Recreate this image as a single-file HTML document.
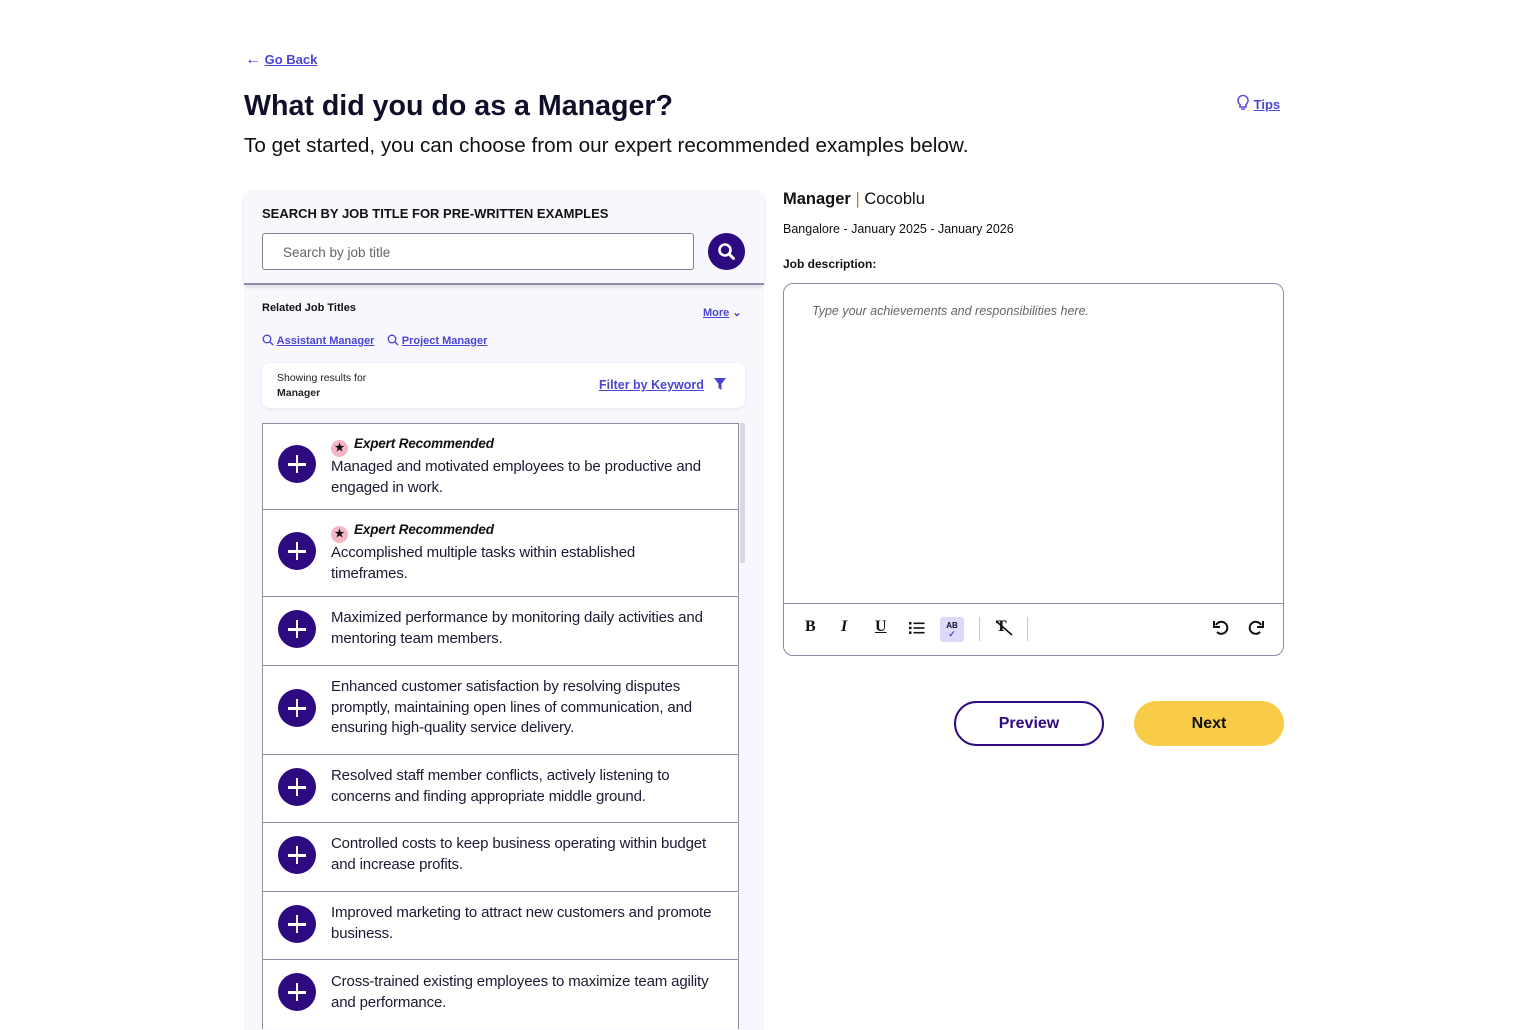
<!DOCTYPE html>
<html><head><meta charset="utf-8"><style>
*{box-sizing:border-box;margin:0;padding:0}
body{width:1540px;height:1024px;overflow:hidden;background:#fff;font-family:"Liberation Sans",sans-serif;color:#0f0f2a;position:relative}
.a{position:absolute}
a,.lnk{color:#4b45d6;text-decoration:underline}
.row{position:absolute;left:262px;width:477px;border-top:1px solid #8a8fa3;background:#fff}
.plus{position:absolute;left:15px;width:38px;height:38px;border-radius:50%;background:#2e0a80}
.plus:before{content:"";position:absolute;left:10px;top:18px;width:18px;height:2.5px;background:#fff}
.plus:after{content:"";position:absolute;left:17.8px;top:10px;width:2.5px;height:18px;background:#fff}
.txt{position:absolute;left:68px;width:392px;font-size:15px;line-height:20.7px;color:#1a1a33;letter-spacing:-0.15px}
.er{font-style:italic;font-weight:bold;font-size:13.5px;color:#111;line-height:18px}
.star{display:inline-block;width:17px;height:17px;border-radius:50%;background:#f6b7c4;vertical-align:-3px;margin-right:6px;text-align:center;font-size:11px;line-height:17px;font-style:normal;color:#111}
.tb{position:absolute;top:618px;font-size:16px;font-weight:bold;color:#111}
</style></head><body>
<div class="a" style="left:245px;top:52px;font-size:13px;font-weight:bold"><span style="color:#4b45d6;font-size:16px;line-height:13px">&#8592;</span>&nbsp;<a style="font-weight:bold">Go Back</a></div>
<div class="a" style="left:244px;top:90px;font-size:28.6px;font-weight:bold;color:#0f0f2a">What did you do as a Manager?</div>
<div class="a" style="left:244px;top:134px;font-size:20.7px;color:#111">To get started, you can choose from our expert recommended examples below.</div>
<div class="a" style="left:1236px;top:94px;font-size:13px;font-weight:bold"><svg width="14" height="18" viewBox="0 0 14 18" style="vertical-align:-3px"><path d="M7 1.5a5 5 0 0 0-3 9v2.5h6v-2.5a5 5 0 0 0-3-9zM5 15h4" fill="none" stroke="#5a4de0" stroke-width="1.6"/></svg>&nbsp;<a>Tips</a></div>

<div class="a" style="left:244px;top:190px;width:520px;height:840px;background:#f7f7fd;border-radius:8px 8px 0 0"></div>
<div class="a" style="left:244px;top:190px;width:520px;height:95px;background:#f7f7fd;border-bottom:2px solid #8a8fa3;box-shadow:0 2px 4px rgba(0,0,0,.12);border-radius:8px 8px 0 0"></div>
<div class="a" style="left:262px;top:206px;font-size:13px;font-weight:bold;color:#111">SEARCH BY JOB TITLE FOR PRE-WRITTEN EXAMPLES</div>
<div class="a" style="left:262px;top:233px;width:432px;height:37px;border:1px solid #7d8090;border-radius:3px;background:#fff;padding:11px 0 0 20px;font-size:13.5px;color:#666"><span>Search by job title</span></div>
<div class="a" style="left:708px;top:233px;width:37px;height:37px;border-radius:50%;background:#2e0a80"><svg width="37" height="37" viewBox="0 0 37 37"><circle cx="17" cy="17" r="5.5" fill="none" stroke="#fff" stroke-width="2.6"/><path d="M21 21l4.5 4.5" stroke="#fff" stroke-width="3" stroke-linecap="round"/></svg></div>
<div class="a" style="left:262px;top:302px;font-size:11px;font-weight:bold;color:#111">Related Job Titles</div>
<div class="a" style="left:703px;top:306px;font-size:11px;font-weight:bold"><a>More</a> <span style="color:#4b45d6">&#8964;</span></div>
<div class="a" style="left:262px;top:334px;font-size:11px;font-weight:bold;color:#4b45d6"><svg width="12" height="12" viewBox="0 0 12 12" style="vertical-align:-2px"><circle cx="5" cy="5" r="3.8" fill="none" stroke="#4b45d6" stroke-width="1.3"/><path d="M8 8l3 3" stroke="#4b45d6" stroke-width="1.3"/></svg> <a>Assistant Manager</a>&nbsp;&nbsp;&nbsp; <svg width="12" height="12" viewBox="0 0 12 12" style="vertical-align:-2px"><circle cx="5" cy="5" r="3.8" fill="none" stroke="#4b45d6" stroke-width="1.3"/><path d="M8 8l3 3" stroke="#4b45d6" stroke-width="1.3"/></svg> <a>Project Manager</a></div>
<div class="a" style="left:262px;top:363px;width:483px;height:45px;background:#fff;border-radius:8px;box-shadow:0 1px 4px rgba(0,0,0,.08)"></div>
<div class="a" style="left:277px;top:371px;font-size:10.5px;color:#222;line-height:15px">Showing results for<br><b>Manager</b></div>
<div class="a" style="left:599px;top:378px;font-size:12.5px;font-weight:bold"><a>Filter by Keyword</a>&nbsp;&nbsp; <svg width="12" height="12" viewBox="0 0 12 12" style="vertical-align:-1px"><path d="M0 0h12L7.5 6v6L4.5 10V6z" fill="#4b45d6"/></svg></div>
<div class="a" style="left:740px;top:423px;width:5px;height:140px;background:#d8d8de;border-radius:2px"></div>

<div class="row" style="top:423px;height:87px;border-left:1px solid #8a8fa3;border-right:1px solid #8a8fa3"><div class="plus" style="top:21px"></div><div class="txt" style="top:10px"><span class="er"><span class="star">&#9733;</span>Expert Recommended</span><br>Managed and motivated employees to be productive and engaged in work.</div></div>
<div class="row" style="top:509px;height:88px;border-left:1px solid #8a8fa3;border-right:1px solid #8a8fa3"><div class="plus" style="top:22px"></div><div class="txt" style="top:10px;width:370px"><span class="er"><span class="star">&#9733;</span>Expert Recommended</span><br>Accomplished multiple tasks within established timeframes.</div></div>
<div class="row" style="top:596px;height:70px;border-left:1px solid #8a8fa3;border-right:1px solid #8a8fa3"><div class="plus" style="top:13px"></div><div class="txt" style="top:11px">Maximized performance by monitoring daily activities and mentoring team members.</div></div>
<div class="row" style="top:665px;height:90px;border-left:1px solid #8a8fa3;border-right:1px solid #8a8fa3"><div class="plus" style="top:23px"></div><div class="txt" style="top:11px">Enhanced customer satisfaction by resolving disputes promptly, maintaining open lines of communication, and ensuring high-quality service delivery.</div></div>
<div class="row" style="top:754px;height:69px;border-left:1px solid #8a8fa3;border-right:1px solid #8a8fa3"><div class="plus" style="top:13px"></div><div class="txt" style="top:11px">Resolved staff member conflicts, actively listening to concerns and finding appropriate middle ground.</div></div>
<div class="row" style="top:822px;height:70px;border-left:1px solid #8a8fa3;border-right:1px solid #8a8fa3"><div class="plus" style="top:13px"></div><div class="txt" style="top:11px">Controlled costs to keep business operating within budget and increase profits.</div></div>
<div class="row" style="top:891px;height:69px;border-left:1px solid #8a8fa3;border-right:1px solid #8a8fa3"><div class="plus" style="top:13px"></div><div class="txt" style="top:11px">Improved marketing to attract new customers and promote business.</div></div>
<div class="row" style="top:959px;height:70px;border-left:1px solid #8a8fa3;border-right:1px solid #8a8fa3"><div class="plus" style="top:13px"></div><div class="txt" style="top:12px">Cross-trained existing employees to maximize team agility and performance.</div></div>

<div class="a" style="left:783px;top:190px;font-size:16.5px;color:#111"><b>Manager</b> <span style="color:#c47a2a">|</span> Cocoblu</div>
<div class="a" style="left:783px;top:222px;font-size:12.5px;color:#111">Bangalore - January 2025 - January 2026</div>
<div class="a" style="left:783px;top:257px;font-size:12px;font-weight:bold;color:#111">Job description:</div>
<div class="a" style="left:783px;top:283px;width:501px;height:373px;border:1px solid #8a8fa3;border-radius:10px;background:#fff"></div>
<div class="a" style="left:812px;top:304px;font-size:12.5px;font-style:italic;color:#666">Type your achievements and responsibilities here.</div>
<div class="a" style="left:784px;top:603px;width:499px;height:1px;background:#8a8fa3"></div>
<div class="tb" style="left:805px;font-family:'Liberation Serif',serif">B</div>
<div class="tb" style="left:841px;font-family:'Liberation Serif',serif;font-style:italic">I</div>
<div class="tb" style="left:875px;font-family:'Liberation Serif',serif;text-decoration:underline">U</div>
<svg class="a" style="left:909px;top:621px" width="16" height="14" viewBox="0 0 16 14"><g fill="#111"><rect x="0" y="1" width="2.5" height="2.5"/><rect x="0" y="5.7" width="2.5" height="2.5"/><rect x="0" y="10.4" width="2.5" height="2.5"/><rect x="4.5" y="1.5" width="11" height="1.6"/><rect x="4.5" y="6.2" width="11" height="1.6"/><rect x="4.5" y="10.9" width="11" height="1.6"/></g></svg>
<div class="a" style="left:940px;top:617px;width:24px;height:25px;background:#dcd9fb;border-radius:3px;font-size:8px;font-weight:bold;text-align:center;padding-top:4px">AB<br><span style="color:#4b45d6;font-size:9px;line-height:6px">&#10003;</span></div>
<div class="a" style="left:979px;top:617px;width:1px;height:24px;background:#c8c8cc"></div>
<div class="tb" style="left:996px;font-family:'Liberation Serif',serif">T</div>
<svg class="a" style="left:994px;top:620px" width="20" height="16"><path d="M2 1l16 14" stroke="#111" stroke-width="1.6"/></svg>
<div class="a" style="left:1027px;top:617px;width:1px;height:24px;background:#c8c8cc"></div>
<svg class="a" style="left:1212px;top:620px" width="18" height="16" viewBox="0 0 18 16"><path d="M4 5a6 6 0 1 1 1 7" fill="none" stroke="#111" stroke-width="2"/><path d="M2 1v6h6" fill="none" stroke="#111" stroke-width="2"/></svg>
<svg class="a" style="left:1247px;top:620px" width="18" height="16" viewBox="0 0 18 16"><path d="M14 5a6 6 0 1 0-1 7" fill="none" stroke="#111" stroke-width="2"/><path d="M16 1v6h-6" fill="none" stroke="#111" stroke-width="2"/></svg>

<div class="a" style="left:954px;top:701px;width:150px;height:45px;border:2px solid #2e0a80;border-radius:23px;text-align:center;line-height:41px;font-size:16px;font-weight:bold;color:#2e0a80">Preview</div>
<div class="a" style="left:1134px;top:701px;width:150px;height:45px;background:#f9cc48;border-radius:23px;text-align:center;line-height:45px;font-size:16px;font-weight:bold;color:#111">Next</div>
</body></html>
